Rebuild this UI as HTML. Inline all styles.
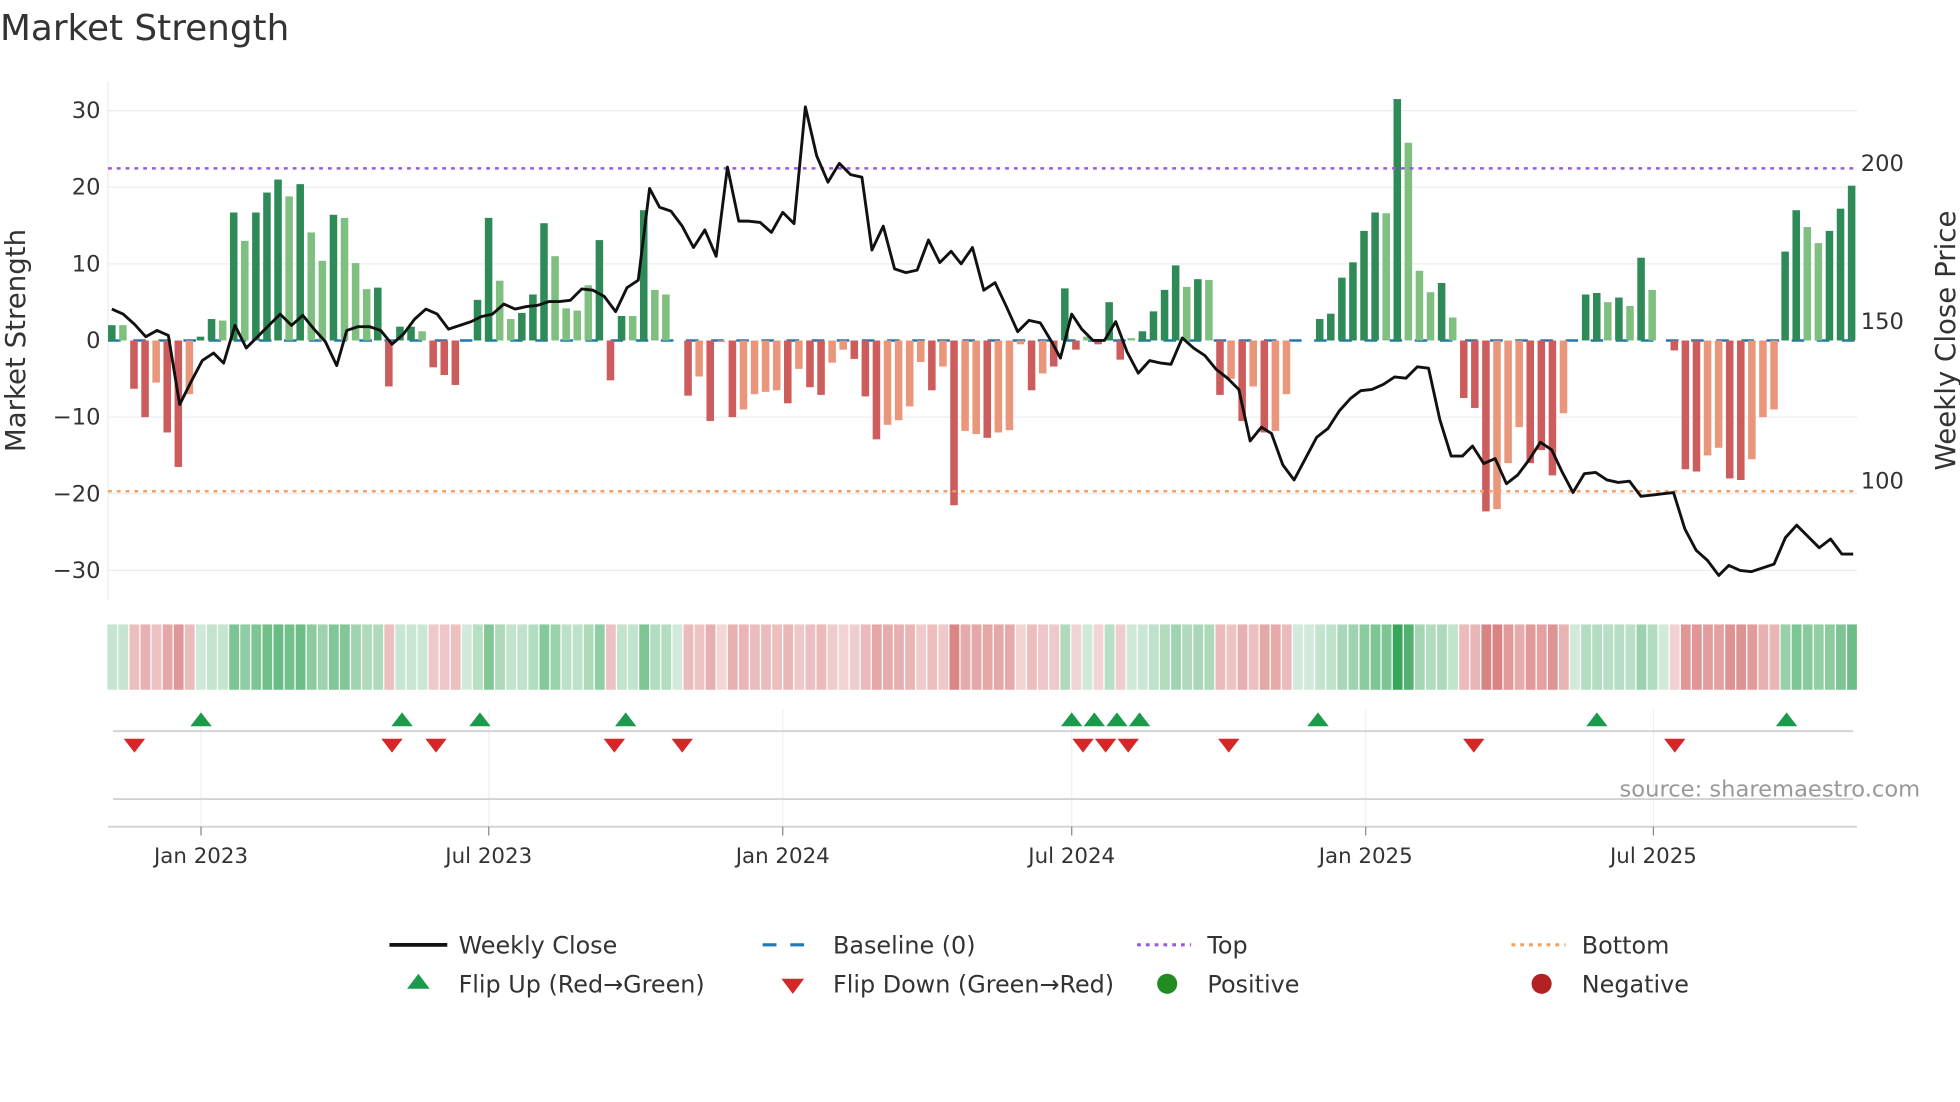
<!DOCTYPE html>
<html><head><meta charset="utf-8"><style>
html,body{margin:0;padding:0;background:#fff;}
svg{display:block;font-family:"DejaVu Sans","Liberation Sans",sans-serif;}
</style></head><body>
<svg id="s" width="1960" height="1102" viewBox="0 0 1560 877.1" preserveAspectRatio="none" xmlns="http://www.w3.org/2000/svg">
<text x="0" y="32" font-size="28.5" fill="#333">Market Strength</text>
<g stroke="#ebedf2" stroke-width="1">
<line x1="86" y1="88" x2="1478" y2="88"/><line x1="86" y1="149" x2="1478" y2="149"/><line x1="86" y1="210" x2="1478" y2="210"/><line x1="86" y1="332" x2="1478" y2="332"/><line x1="86" y1="393" x2="1478" y2="393"/><line x1="86" y1="454" x2="1478" y2="454"/>
</g>
<line x1="86" y1="65" x2="86" y2="478" stroke="#ebedf2"/>
<g font-size="18" fill="#333" text-anchor="end">
<text x="80" y="94">30</text><text x="80" y="155">20</text><text x="80" y="216">10</text><text x="80" y="277">0</text><text x="80" y="338">−10</text><text x="80" y="399">−20</text><text x="80" y="460">−30</text>
</g>
<g font-size="18" fill="#333">
<text x="1481" y="136">200</text><text x="1481" y="262">150</text><text x="1481" y="389">100</text>
</g>
<text transform="translate(20,271) rotate(-90)" font-size="22" fill="#333" text-anchor="middle">Market Strength</text>
<text transform="translate(1556,271) rotate(-90)" font-size="22" fill="#333" text-anchor="middle">Weekly Close Price</text>
<line x1="86" y1="271" x2="1478" y2="271" stroke="#1f77b4" stroke-width="2" stroke-dasharray="10,10"/>
<g id="bars"></g>
<line x1="86" y1="134" x2="1478" y2="134" stroke="#9b59d9" stroke-width="2" stroke-dasharray="3,4"/>
<line x1="86" y1="391" x2="1478" y2="391" stroke="#f0a060" stroke-width="2" stroke-dasharray="3,4"/>
<polyline id="price" fill="none" stroke="#111" stroke-width="2.3" stroke-linejoin="round"/>
<g id="heat"></g>
<g stroke="#eef0f2" stroke-width="1">
<line x1="160" y1="565" x2="160" y2="658"/><line x1="389" y1="565" x2="389" y2="658"/><line x1="623" y1="565" x2="623" y2="658"/><line x1="853" y1="565" x2="853" y2="658"/><line x1="1087" y1="565" x2="1087" y2="658"/><line x1="1316" y1="565" x2="1316" y2="658"/>
</g>
<line x1="90" y1="582" x2="1475" y2="582" stroke="#d0d2d5" stroke-width="1.5"/>
<line x1="90" y1="636" x2="1475" y2="636" stroke="#d0d2d5" stroke-width="1.5"/>
<line x1="86" y1="658" x2="1478" y2="658" stroke="#d0d2d5" stroke-width="1.5"/>
<g stroke="#888" stroke-width="1">
<line x1="160" y1="658" x2="160" y2="665"/><line x1="389" y1="658" x2="389" y2="665"/><line x1="623" y1="658" x2="623" y2="665"/><line x1="853" y1="658" x2="853" y2="665"/><line x1="1087" y1="658" x2="1087" y2="665"/><line x1="1316" y1="658" x2="1316" y2="665"/>
</g>
<g font-size="17" fill="#333" text-anchor="middle">
<text x="160" y="687">Jan 2023</text><text x="389" y="687">Jul 2023</text><text x="623" y="687">Jan 2024</text><text x="853" y="687">Jul 2024</text><text x="1087" y="687">Jan 2025</text><text x="1316" y="687">Jul 2025</text>
</g>
<g id="tri"></g>
<text x="1289" y="634" font-size="18" fill="#999">source: sharemaestro.com</text>
<g font-size="19" fill="#333">
<line x1="310" y1="752" x2="356" y2="752" stroke="#111" stroke-width="3"/><text x="365" y="759">Weekly Close</text>
<line x1="607" y1="752" x2="650" y2="752" stroke="#1f77b4" stroke-width="2.5" stroke-dasharray="11,11"/><text x="663" y="759">Baseline (0)</text>
<line x1="905" y1="752" x2="948" y2="752" stroke="#9b59d9" stroke-width="2.5" stroke-dasharray="3,4"/><text x="961" y="759">Top</text>
<line x1="1203" y1="752" x2="1246" y2="752" stroke="#f0a060" stroke-width="2.5" stroke-dasharray="3,4"/><text x="1259" y="759">Bottom</text>
<polygon points="324,787 342,787 333,775" fill="#1a9a4a"/><text x="365" y="790">Flip Up (Red→Green)</text>
<polygon points="622,779 640,779 631,791" fill="#d62728"/><text x="663" y="790">Flip Down (Green→Red)</text>
<circle cx="929" cy="783" r="8" fill="#228b22"/><text x="961" y="790">Positive</text>
<circle cx="1227" cy="783" r="8" fill="#b22222"/><text x="1259" y="790">Negative</text>
</g>
</svg>
<script>
var V="2D 2L -6.3R -10R -5.5O -12R -16.5R -7O 0.5D 2.8D 2.6L 16.7D 13L 16.7D 19.3D 21D 18.8L 20.4D 14.1L 10.4L 16.4D 16L 10.1L 6.7L 6.9D -6R 1.8D 1.8D 1.2L -3.5R -4.5R -5.8R 0D 5.3D 16D 7.8L 2.8L 3.6D 6D 15.3D 11L 4.2L 3.9L 7.2L 13.1D -5.2R 3.2D 3.2L 17D 6.6L 6L 0D -7.2R -4.7O -10.5R -0.2O -10R -9O -7O -6.7O -6.5O -8.2R -3.7O -6.1R -7.1R -2.9O -1.2O -2.4R -7.3R -12.9R -11O -10.4O -8.6O -2.8O -6.5R -3.4O -21.5R -11.8O -12.2O -12.7R -12O -11.7O -0.5O -6.5R -4.3O -3.4R 6.8D -1.2R 0.5L -0.5R 5D -2.5R 0.3L 1.2D 3.8D 6.6D 9.8D 7L 8D 7.9L -7.1R -5O -10.5R -6O -12R -11.8O -7O 0D 0D 2.8D 3.5D 8.2D 10.2D 14.3D 16.7D 16.6L 31.5D 25.8L 9.1L 6.3L 7.5D 3L -7.5R -8.8R -22.3R -22O -16O -11.3O -16R -14.3R -17.6R -9.5O 0D 6D 6.2D 5L 5.6D 4.5L 10.8D 6.6L 0D -1.3R -16.8R -17.1R -15O -14O -18R -18.2R -15.5O -10O -9O 11.6D 17D 14.8L 12.7L 14.3D 17.2D 20.2D".split(" ");
var C={D:"#2e8b57",L:"#7fbf7f",R:"#cd5c5c",O:"#e9967a"};
var ns="http://www.w3.org/2000/svg",bars=document.getElementById("bars"),heat=document.getElementById("heat");
function el(t,a,p){var e=document.createElementNS(ns,t);for(var k in a)e.setAttribute(k,a[k]);p.appendChild(e);return e;}
V.forEach(function(s,i){var v=parseFloat(s),c=s.slice(-1),x=89+i*8.82;
 if(Math.abs(v)>0.05){var h=Math.abs(v)*6.1;el("rect",{x:x-3,y:v>0?271-h:271,width:6,height:h,fill:C[c]},bars);}
 var f;if(v>=0){var a=0.22+0.72*Math.min(v/31,1);f="rgba(44,160,80,"+a.toFixed(2)+")";}else{var a=0.22+0.45*Math.min(-v/22,1);f="rgba(200,70,70,"+a.toFixed(2)+")";}
 el("rect",{x:x-3.6,y:497,width:7.8,height:52,fill:f},heat);
});
var P="89,246 98,250 107,258 116,268 125,263 134,267 143,322 152,304 161,287 170,281 178,289 187,259 196,277 205,268 214,259 223,250 232,259 241,251 250,262 259,272 268,291 276,263 285,260 294,260 303,263 312,274 321,266 330,254 339,246 348,250 357,262 366,259 375,256 383,252 392,250 401,242 410,246 419,244 428,243 437,240 445,240 454,239 463,230 472,231 481,236 490,248 499,229 508,223 517,150 525,165 534,168 543,180 552,197 561,183 570,204 579,133 588,176 596,176 605,177 614,185 623,169 632,178 641,85 650,124 659,145 668,130 677,139 686,141 694,199 703,180 712,214 721,217 730,215 739,191 748,209 757,200 765,210 774,197 783,231 792,225 801,244 810,264 819,255 828,257 837,272 844,285 853,250 861,262 870,271 879,271 888,256 897,280 906,297 915,287 924,289 932,290 941,269 950,277 959,283 968,294 977,301 986,310 995,351 1004,340 1012,345 1021,370 1030,382 1039,365 1048,348 1057,341 1066,327 1075,317 1083,311 1092,310 1101,306 1110,300 1119,301 1128,292 1137,293 1146,334 1155,363 1164,363 1172,355 1181,369 1190,365 1199,385 1208,378 1217,366 1226,352 1235,358 1243,375 1252,392 1261,377 1270,376 1279,382 1288,384 1297,383 1306,395 1315,394 1323,393 1332,392 1341,421 1350,438 1359,446 1368,458 1376,450 1385,454 1394,455 1403,452 1412,449 1421,428 1430,418 1439,427 1448,436 1457,429 1466,441 1475,441";
document.getElementById("price").setAttribute("points",P);
var tri=document.getElementById("tri");
[160,320,382,498,853,871,889,907,1049,1271,1422].forEach(function(x){el("polygon",{points:(x-8.5)+",578 "+(x+8.5)+",578 "+x+",567",fill:"#1a9a4a"},tri);});
[107,312,347,489,543,862,880,898,978,1173,1333].forEach(function(x){el("polygon",{points:(x-8.5)+",588 "+(x+8.5)+",588 "+x+",599",fill:"#d62728"},tri);});
</script>
</body></html>
